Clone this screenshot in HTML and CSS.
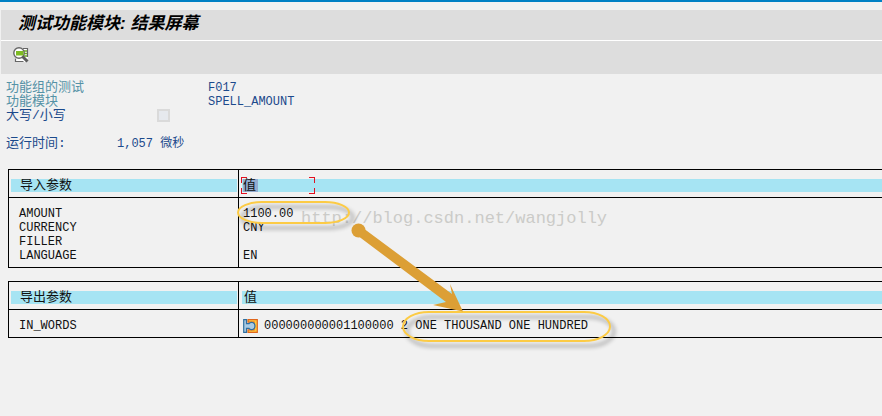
FILE: index.html
```
<!DOCTYPE html>
<html lang="zh-CN">
<head>
    <meta charset="UTF-8">
    <meta name="viewport" content="width=device-width, initial-scale=1.0">
    <title>测试功能模块: 结果屏幕</title>
    <link rel="stylesheet" href="styles.css">
</head>
<body>
    <header class="header">
        <h1 class="title">测试功能模块: 结果屏幕</h1>
        <div class="toolbar">
            <button type="button" class="tool-btn" aria-label="显示">
                <svg width="16" height="16" viewBox="0 0 16 16">
                    <path d="M8 1h7v10l-3 4H2v-4z" fill="#fff"/>
                    <path d="M10 1.500h4.500v8.500M2.500 11.500v3h8" fill="none" stroke="#666" stroke-width="1.2"/>
                    <path d="M11 4h3M11 6.500h3M11 9h3" stroke="#6cae1c" stroke-width="1.500"/>
                    <circle cx="6" cy="6" r="5.200" fill="#fff" stroke="#666" stroke-width="1.400"/>
                    <path d="M3 4h7.500v4.500H3z" fill="#7dbb22"/>
                    <path d="M9.500 9.500l5 5" stroke="#5c5c5c" stroke-width="3"/>
                </svg>
            </button>
        </div>
    </header>

    <main class="content">
        <div class="info">
            <span class="label muted">功能组的测试</span>
            <span class="value">F017</span>
            <span class="label muted">功能模块</span>
            <span class="value">SPELL_AMOUNT</span>
            <label class="label" for="upperLower">大写/小写</label>
            <input type="checkbox" id="upperLower" class="check" disabled>
        </div>
        <div class="runtime">
            <span class="label">运行时间:</span>
            <span>1,057 微秒</span>
        </div>

        <table class="params">
            <thead>
                <tr>
                    <th class="name"><div class="band">导入参数</div></th>
                    <th><div class="band"><span class="cursor"><mark>值</mark></span></div></th>
                </tr>
            </thead>
            <tbody>
                <tr><td>AMOUNT</td><td>1100.00</td></tr>
                <tr><td>CURRENCY</td><td>CNY</td></tr>
                <tr><td>FILLER</td><td></td></tr>
                <tr><td>LANGUAGE</td><td>EN</td></tr>
            </tbody>
        </table>

        <table class="params">
            <thead>
                <tr>
                    <th class="name"><div class="band">导出参数</div></th>
                    <th><div class="band">值</div></th>
                </tr>
            </thead>
            <tbody>
                <tr>
                    <td>IN_WORDS</td>
                    <td>
                        <div class="struct">
                            <svg width="15" height="14" viewBox="0 0 15 14">
                                <path d="M5 .7h9.300v12.600H5v-2.500h6v-7.600H5z" fill="#ffc83c" stroke="#e0661c" stroke-width="1.200"/>
                                <path d="M.7 .7h2.800v4h2.500c1.500-2.500 6-1.500 6 2.300s-4.500 4.800-6 2.300h-2.500v4H.7z" fill="#a9cbe4" stroke="#2f6f9f" stroke-width="1.200"/>
                            </svg>
                            <span>000000000001100000 2 ONE THOUSAND ONE HUNDRED</span>
                        </div>
                    </td>
                </tr>
            </tbody>
        </table>
    </main>

    <div class="watermark">http://blog.csdn.net/wangjolly</div>

    <!-- callouts drawn over the result list -->
    <svg class="notes" width="640" height="360" viewBox="0 0 640 360" aria-hidden="true">
        <g class="ring">
            <rect x="238" y="202" width="111" height="21" rx="24" ry="10.500"/>
            <rect x="403" y="312" width="207" height="29" rx="26" ry="14.500"/>
        </g>
        <g class="arrow">
            <circle cx="358.500" cy="230.500" r="7"/>
            <path d="M361 226.500L452 294L450 284L463 311.500L433 305L446 302L355.500 234z"/>
        </g>
    </svg>
</body>
</html>
```
FILE: styles.css
```
* {
    margin: 0;
    padding: 0;
    box-sizing: border-box;
}

body {
    position: relative;
    min-height: 100vh;
    overflow-x: hidden;
    background: #f1f1f1;
    border-top: 2px solid #0080c4;
    color: #111;
    font-family: "Liberation Mono", "Noto Sans CJK SC", monospace;
    font-size: 12px;
    line-height: 14px;
}

.header {
    padding: 8px 0 0 1px;
}

.title {
    height: 30px;
    padding-left: 17px;
    background: #ddd;
    color: #000;
    font-family: "Liberation Sans", "Noto Sans CJK SC", sans-serif;
    font-size: 17px;
    font-style: italic;
    line-height: 28px;
}

.toolbar {
    display: flex;
    height: 34px;
    padding: 6px 12px;
    border-top: 1px solid #fff;
    background: #ddd;
}

.tool-btn {
    width: 18px;
    height: 16px;
    border: none;
    background: none;
}

.tool-btn svg {
    display: block;
}

.content {
    padding: 7px 0 0 6px;
}

.info {
    display: grid;
    grid-template-columns: 151px 51px 1fr;
    grid-auto-rows: 14px;
    color: #1c4a8c;
}

.label {
    font-size: 13px;
    color: #1c4a8c;
}

.muted {
    color: #5592a6;
}

.value {
    grid-column: 3;
}

.check {
    width: 13px;
    height: 13px;
    appearance: none;
    border: 2px solid #dadada;
    background: #e6e9ee;
}

.runtime {
    display: grid;
    grid-template-columns: 111px 1fr;
    margin-top: 14px;
    color: #1c4a8c;
}

.params {
    width: calc(100% - 2px);
    margin: 18px 0 0 2px;
    border: 1px solid #000;
    border-right: none;
    border-spacing: 0;
    table-layout: fixed;
}

.params + .params {
    margin-top: 13px;
}

.params th {
    padding: 9px 0 5px 3px;
    border-bottom: 1px solid #000;
    font-weight: normal;
    text-align: left;
}

.params .name {
    width: 230px;
    padding: 9px 1px 5px 2px;
}

.params th:first-child,
.params td:first-child {
    border-right: 1px solid #000;
}

.band {
    display: flex;
    align-items: center;
    height: 13px;
    padding-left: 2px;
    background: #a6e4f3;
    font-size: 13px;
    line-height: 13px;
}

.name .band {
    padding-left: 9px;
}

.params td {
    padding: 0 0 0 4px;
    height: 14px;
}

.params td:first-child {
    padding-left: 10px;
}

.params tbody tr:first-child td {
    padding-top: 9px;
}

.params tbody tr:last-child td {
    padding-bottom: 4px;
}

/* red corner brackets round the cell that has the cursor */
.cursor {
    flex: none;
    width: 74px;
    height: 17px;
    margin-left: -3px;
    padding: 2px 0 0 2px;
    background:
        linear-gradient(#e01020, #e01020) 0 0 / 6px 1px,
        linear-gradient(#e01020, #e01020) 0 0 / 1px 6px,
        linear-gradient(#e01020, #e01020) 100% 0 / 6px 1px,
        linear-gradient(#e01020, #e01020) 100% 0 / 1px 6px,
        linear-gradient(#e01020, #e01020) 0 100% / 6px 1px,
        linear-gradient(#e01020, #e01020) 0 100% / 1px 6px,
        linear-gradient(#e01020, #e01020) 100% 100% / 6px 1px,
        linear-gradient(#e01020, #e01020) 100% 100% / 1px 6px;
    background-repeat: no-repeat;
}

.cursor mark {
    display: block;
    width: 15px;
    height: 13px;
    background: #93acd0;
    color: #111;
}

.struct {
    display: flex;
    gap: 6px;
    white-space: nowrap;
}

.watermark {
    position: absolute;
    top: 207px;
    left: 301px;
    color: #cbcbc8;
    font-size: 17px;
    line-height: 20px;
    pointer-events: none;
}

.notes {
    position: absolute;
    top: -2px;
    left: 0;
    pointer-events: none;
}

.ring rect {
    fill: none;
    stroke: #fccb45;
    stroke-width: 2;
    filter: drop-shadow(4px 5px 2px rgba(0, 0, 0, 0.4));
}

.arrow {
    fill: #dc9f35;
}
```
